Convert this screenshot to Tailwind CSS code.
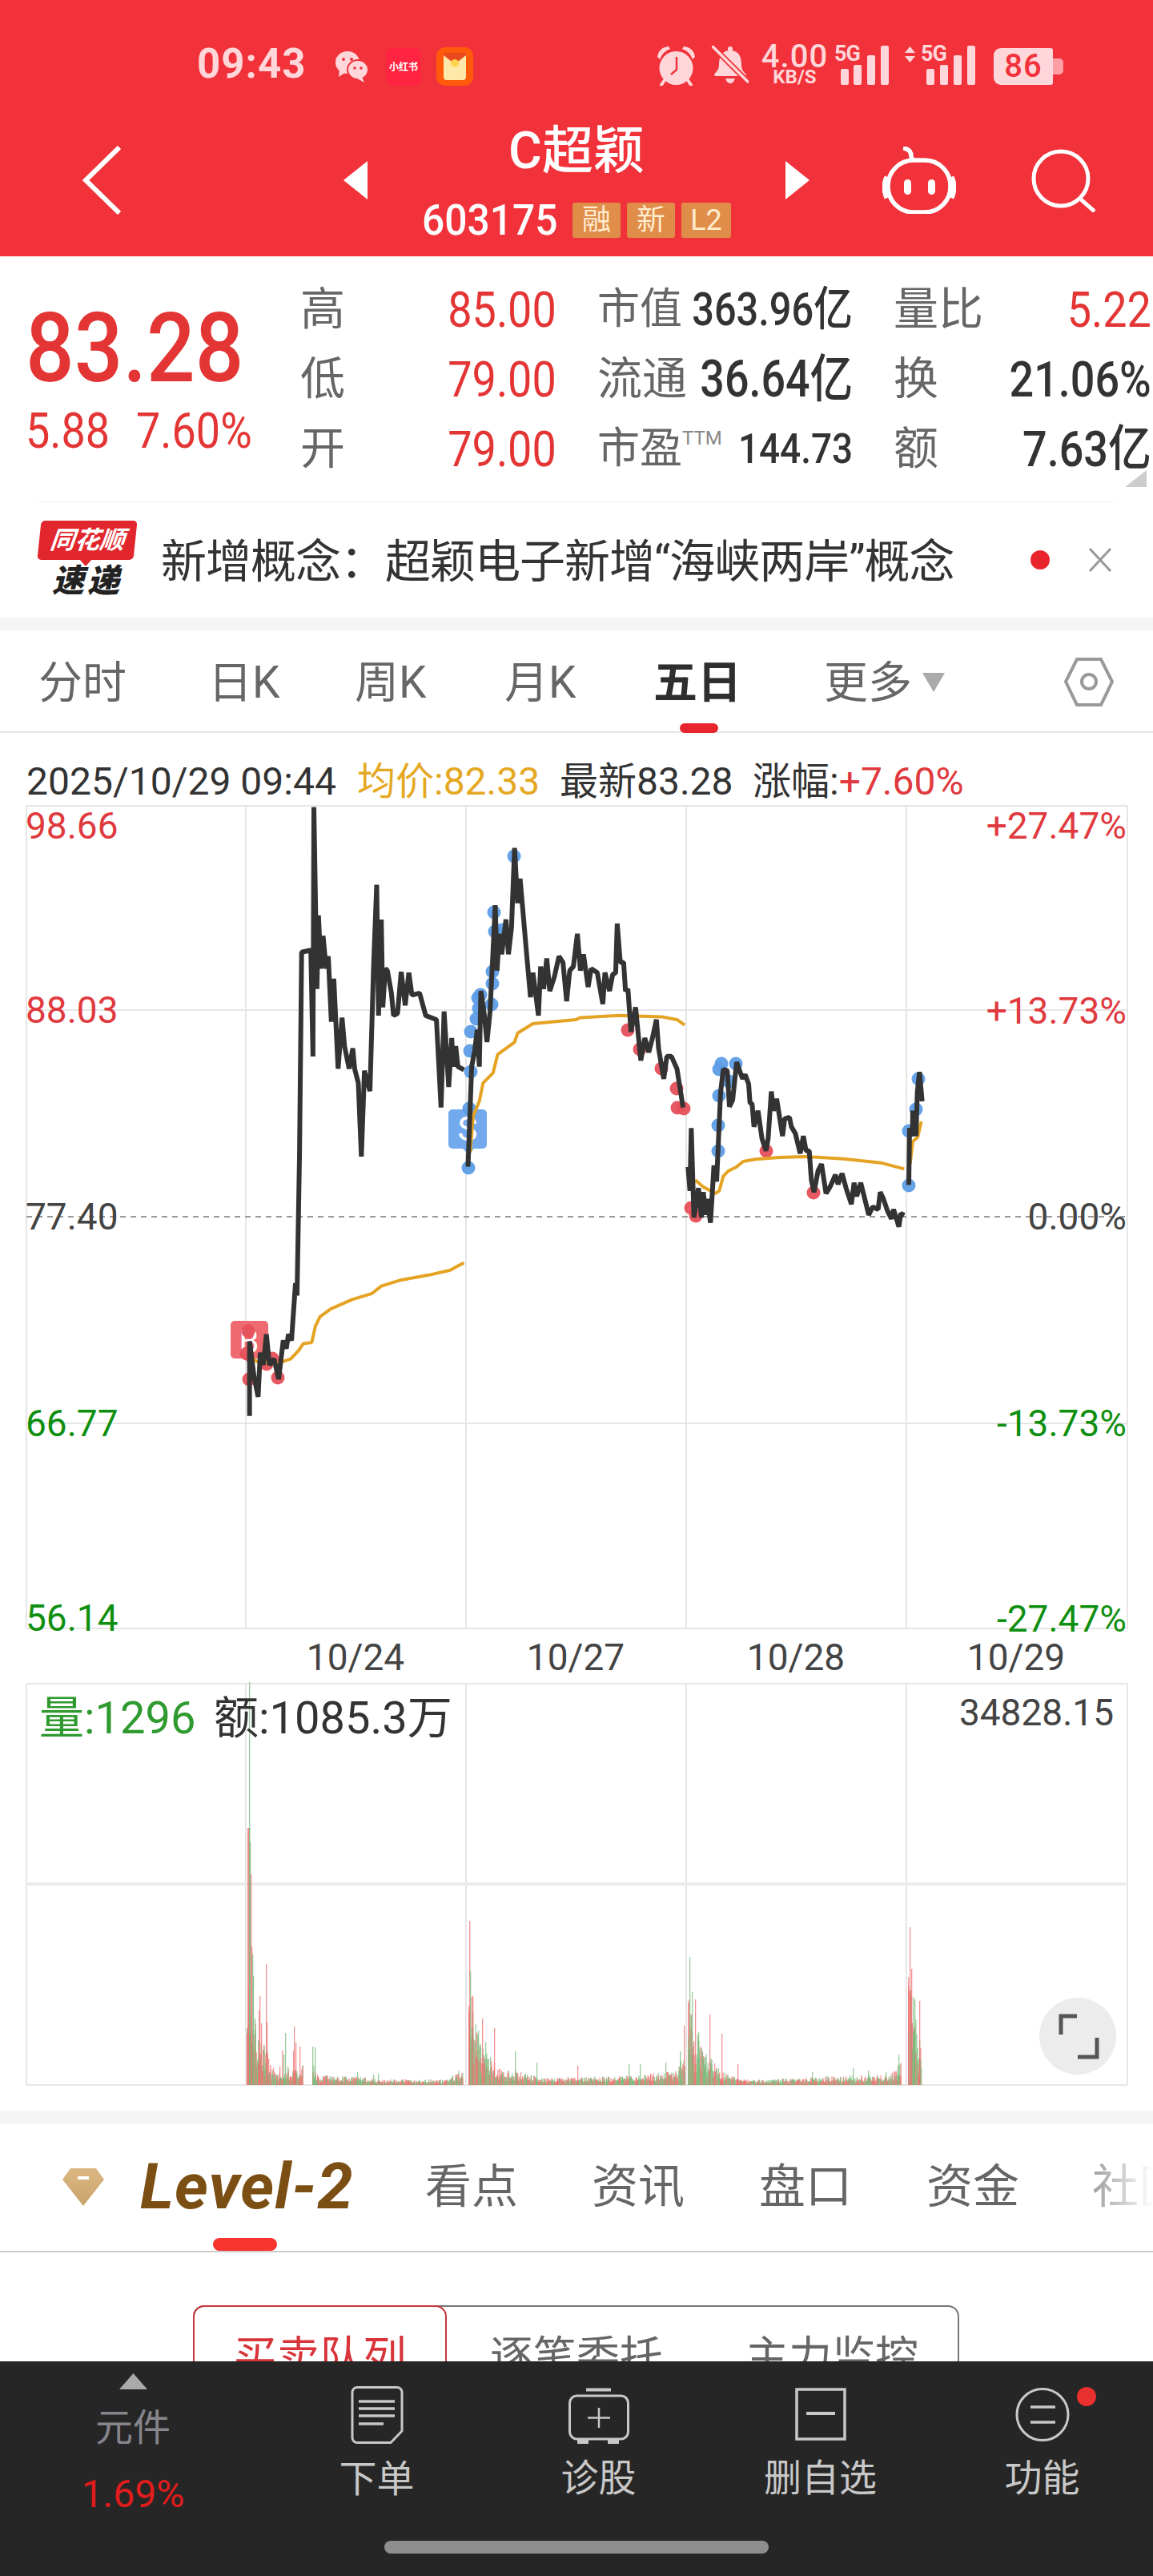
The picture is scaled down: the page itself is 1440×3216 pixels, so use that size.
<!DOCTYPE html>
<html lang="zh-CN">
<head>
<meta charset="UTF-8">
<meta name="viewport" content="width=device-width, initial-scale=1.0">
<script src="https://cdn.jsdelivr.net/npm/@tailwindcss/browser@4"></script>
<title>C超颖</title>
</head>
<body>
<div class="relative w-[1440px] h-[3216px] overflow-hidden bg-white flex flex-col font-[Roboto,'Noto_Sans_CJK_SC',sans-serif]">

  <!-- red header -->
  <header class="h-[320px] shrink-0 bg-[#f1323b] flex flex-col">
    <div class="h-[150px] pt-[57px] pl-[246px] flex items-start text-[#ffd6d9]">
      <span class="w-[172px] text-[51px] leading-[46px] font-bold tracking-[1px]">09:43</span>
      <svg class="w-[42px] h-[40px] mt-[6px] mr-[22px]" viewBox="0 0 42 40" fill="#ffd6d9"><ellipse cx="16" cy="15" rx="15" ry="14"/><path d="M6 24 L5 33 L14 27Z"/><ellipse cx="29" cy="24" rx="13" ry="12" stroke="#f1323b" stroke-width="2"/><path d="M34 33 L37 40 L28 35Z"/><circle cx="11" cy="11" r="2" fill="#f1323b"/><circle cx="21" cy="11" r="2" fill="#f1323b"/><circle cx="25" cy="22" r="1.8" fill="#f1323b"/><circle cx="33" cy="22" r="1.8" fill="#f1323b"/></svg>
      <div class="w-[44px] h-[47px] mt-[3px] mr-[19px] bg-[#ff2442] rounded-[8px] flex items-center justify-center text-white text-[12px] font-bold whitespace-nowrap">小红书</div>
      <svg class="w-[46px] h-[48px] mt-[2px]" viewBox="0 0 46 48"><rect width="46" height="48" rx="11" fill="#ff5a0a"/><rect x="9" y="7" width="28" height="34" rx="4" fill="#ffe9a8"/><path d="M9 10 L23 21 L37 10 V7 H9Z" fill="#e8491f"/><circle cx="23" cy="20" r="5" fill="#ffd34d"/></svg>
      <div class="flex-1"></div>
      <!-- alarm -->
      <svg class="w-[49px] h-[50px] mr-[20px]" viewBox="0 0 49 50" fill="#ffd6d9"><circle cx="24.5" cy="28" r="21"/><path d="M1 14 Q3 2 15 1 L17 4 Q8 7 4 17Z"/><path d="M48 14 Q46 2 34 1 L32 4 Q41 7 45 17Z"/><path d="M10 43 L6 49 M39 43 L43 49" stroke="#ffd6d9" stroke-width="4" stroke-linecap="round"/><path d="M25 14 V30 L18 36" stroke="#f1323b" stroke-width="2.5" fill="none"/></svg>
      <!-- muted bell -->
      <svg class="w-[46px] h-[47px] mr-[8px]" viewBox="0 0 46 47" fill="#ffd6d9"><circle cx="23" cy="4" r="3"/><path d="M23 6 C12 6 9 14 9 24 C9 30 5 33 3 36 L4 38 H42 L43 36 C40 33 37 30 37 24 C37 14 34 6 23 6Z"/><path d="M17 41 H29 Q27 47 23 47 Q19 47 17 41Z"/><path d="M1 1 L46 46" stroke="#f1323b" stroke-width="7"/><path d="M1 1 L45 45" stroke="#ffd6d9" stroke-width="3.5" stroke-linecap="round"/></svg>
      <div class="w-[99px] flex flex-col items-center font-medium">
        <span class="text-[40px] leading-[28px] tracking-[1px]">4.00</span>
        <span class="text-[24px] leading-[22px] font-bold">KB/S</span>
      </div>
      <div class="relative w-[68px] h-[50px]">
        <span class="absolute left-0 -top-[3px] text-[27px] leading-[27px] font-bold tracking-[-1px]">5G</span>
        <svg class="absolute left-[8px] top-0 w-[60px] h-[50px]" viewBox="0 0 60 50" fill="#ffd6d9"><rect x="0" y="29" width="10" height="20" rx="2"/><rect x="16" y="24" width="10" height="25" rx="2"/><rect x="33" y="12" width="10" height="37" rx="2"/><rect x="50" y="0" width="10" height="49" rx="2"/></svg>
      </div>
      <div class="relative w-[88px] h-[50px] ml-[20px]">
        <svg class="absolute left-0 top-[1px] w-[13px] h-[20px]" viewBox="0 0 13 20" fill="#ffd6d9"><path d="M6.5 0 L13 8 H0Z M6.5 20 L0 12 H13Z"/></svg>
        <span class="absolute left-[20px] -top-[3px] text-[27px] leading-[27px] font-bold tracking-[-1px]">5G</span>
        <svg class="absolute left-[27px] top-0 w-[61px] h-[50px]" viewBox="0 0 61 50" fill="#ffd6d9"><rect x="0" y="29" width="10" height="20" rx="2"/><rect x="17" y="24" width="10" height="25" rx="2"/><rect x="34" y="12" width="10" height="37" rx="2"/><rect x="51" y="0" width="10" height="49" rx="2"/></svg>
      </div>
      <div class="flex h-[46px] mt-[3px] ml-[23px] mr-[112px] items-center">
        <div class="w-[74px] h-[46px] bg-[#ffd6d9] rounded-l-[9px] rounded-r-[3px] flex items-center justify-center text-[#f1323b] text-[40px] font-medium tracking-[1px]">86</div>
        <div class="w-[13px] h-[20px] bg-[#ff9ea4] rounded-r-[5px]"></div>
      </div>
    </div>
    <div class="h-[150px] grid grid-cols-[429px_582px_1fr] items-center">
      <div class="pl-[103px]">
        <svg class="w-[48px] h-[86px]" viewBox="0 0 48 86" fill="none" stroke="#fff" stroke-width="6"><path d="M46 2 L4 43 L46 84"/></svg>
      </div>
      <div class="flex items-center justify-between">
        <svg class="w-[30px] h-[48px]" viewBox="0 0 30 48" fill="#fff"><path d="M30 0 V48 L0 24Z"/></svg>
        <div class="flex flex-col items-center text-white">
          <div class="text-[64px] leading-[72px] font-medium">C超颖</div>
          <div class="flex items-center mt-[28px] h-[44px]">
            <span class="text-[54px] leading-[44px] font-medium mr-[18px] w-[170px] scale-x-[.92] origin-left">603175</span>
            <span class="w-[60px] h-[44px] bg-[#e08d4a] text-[#ffeccf] text-[36px] rounded-[3px] flex items-center justify-center mr-[8px]">融</span>
            <span class="w-[60px] h-[44px] bg-[#e08d4a] text-[#ffeccf] text-[36px] rounded-[3px] flex items-center justify-center mr-[8px]">新</span>
            <span class="w-[62px] h-[44px] bg-[#e08d4a] text-[#ffeccf] text-[36px] rounded-[3px] flex items-center justify-center">L2</span>
          </div>
        </div>
        <svg class="w-[30px] h-[48px]" viewBox="0 0 30 48" fill="#fff"><path d="M0 0 V48 L30 24Z"/></svg>
      </div>
      <div class="flex items-center pl-[91px]">
        <svg class="w-[92px] h-[84px] mr-[94px]" viewBox="0 0 92 84" fill="none" stroke="#fff" stroke-width="5.5"><path d="M26 2 Q36 3 36 12 Q36 16 40 17"/><rect x="7" y="17" width="78" height="65" rx="32"/><path d="M6 38 Q0 50 6 64 M86 38 Q92 50 86 64" stroke-width="7"/><rect x="27" y="41" width="9" height="19" rx="4.5" fill="#fff" stroke="none"/><rect x="57" y="41" width="9" height="19" rx="4.5" fill="#fff" stroke="none"/></svg>
        <svg class="w-[80px] h-[80px]" viewBox="0 0 80 80" fill="none" stroke="#fff" stroke-width="5"><circle cx="37" cy="38" r="34"/><path d="M62 64 L79 79"/></svg>
      </div>
    </div>
  </header>

  <!-- quote block -->
  <section class="relative h-[307px] shrink-0">
    <div class="flex pt-[23px] h-[306px]">
      <div class="w-[375px] pl-[32px] shrink-0">
        <div class="text-[#e43535] text-[120px] leading-[118px] font-medium scale-x-[.89] origin-left mt-[33px]">83.28</div>
        <div class="flex text-[#e43535] text-[62px] leading-[70px] mt-[9px]">
          <span class="w-[138px] scale-x-[.87] origin-left">5.88</span>
          <span class="scale-x-[.87] origin-left whitespace-nowrap">7.60%</span>
        </div>
      </div>
      <div class="grid grid-cols-[320px_319px_322px] gap-x-[51px] auto-rows-[87px] text-[#666] text-[56px] leading-[87px] whitespace-nowrap">
        <div class="flex justify-between"><span>高</span><span class="text-[#e43535] text-[62px] scale-x-[.87] origin-right">85.00</span></div>
        <div class="flex justify-between"><span class="text-[53px]">市值</span><span class="-ml-[80px] text-[#333] text-[58px] font-medium scale-x-[.84] origin-right">363.96亿</span></div>
        <div class="flex justify-between"><span>量比</span><span class="text-[#e43535] text-[62px] scale-x-[.87] origin-right">5.22</span></div>

        <div class="flex justify-between"><span>低</span><span class="text-[#e43535] text-[62px] scale-x-[.87] origin-right">79.00</span></div>
        <div class="flex justify-between"><span class="text-[56px]">流通</span><span class="-ml-[80px] text-[#333] text-[64px] font-medium scale-x-[.84] origin-right">36.64亿</span></div>
        <div class="flex justify-between"><span>换</span><span class="text-[#333] text-[62px] font-medium scale-x-[.87] origin-right">21.06%</span></div>

        <div class="flex justify-between"><span>开</span><span class="text-[#e43535] text-[62px] scale-x-[.87] origin-right">79.00</span></div>
        <div class="flex justify-between"><span class="flex items-start text-[53px]">市盈<span class="text-[24px] leading-[24px] mt-[18px] text-[#888]">TTM</span></span><span class="text-[#333] text-[51px] font-medium scale-x-[.9] origin-right">144.73</span></div>
        <div class="flex justify-between"><span>额</span><span class="text-[#333] text-[62px] font-medium scale-x-[.87] origin-right">7.63亿</span></div>
      </div>
    </div>
    <svg class="absolute left-[1405px] top-[267px] w-[27px] h-[21px]" viewBox="0 0 27 21" fill="#ccc"><path d="M27 0 V21 H0Z"/></svg>
    <div class="mx-[48px] border-b border-[#eeeeee] w-[1343px]"></div>
  </section>

  <!-- news ticker -->
  <section class="h-[144px] shrink-0 flex items-center pl-[49px]">
    <div class="relative w-[120px] h-[98px] shrink-0 mr-[32px] italic">
      <div class="h-[49px] bg-[#e1262d] rounded-[5px] -skew-x-6 flex items-center justify-center text-white text-[31px] font-bold leading-none whitespace-nowrap">同花顺</div>
      <svg class="absolute left-[50px] top-[48px] w-[16px] h-[9px]" viewBox="0 0 16 9" fill="#e1262d"><path d="M0 0 H16 L8 9Z"/></svg>
      <div class="text-center text-[#222] text-[40px] font-black leading-[46px] mt-[4px] tracking-[4px]">速递</div>
    </div>
    <div class="w-[1086px] pt-[5px] text-[#333] text-[57px] leading-none whitespace-nowrap tracking-[-1px]">新增概念：超颖电子新增“海峡两岸”概念</div>
    <div class="w-[24px] h-[24px] rounded-full bg-[#e8242c] mr-[48px] shrink-0"></div>
    <svg class="w-[30px] h-[30px]" viewBox="0 0 30 30" fill="none" stroke="#999" stroke-width="3"><path d="M2 1 L28 29 M28 1 L2 29"/></svg>
  </section>
  <div class="h-[16px] shrink-0 bg-[#f5f5f5]"></div>

  <!-- period tabs -->
  <nav class="relative h-[128px] shrink-0 border-b-2 border-[#e6e6e6] pl-[48px] flex items-center text-[#666] text-[55px] leading-none pt-[4px]">
    <span class="w-[212px]">分时</span>
    <span class="w-[183px]">日K</span>
    <span class="w-[187px]">周K</span>
    <span class="w-[186px]">月K</span>
    <span class="w-[213px] text-[#2e2e2e] font-bold">五日</span>
    <span>更多</span>
    <svg class="w-[28px] h-[24px] ml-[13px]" viewBox="0 0 28 24" fill="#aaa"><path d="M0 0 H28 L14 24Z"/></svg>
    <svg class="absolute left-[1329px] top-[34px] w-[62px] h-[61px]" viewBox="0 0 62 61" fill="none" stroke="#999" stroke-width="4"><path d="M16 2 H46 L60 30 L46 59 H16 L2 30Z"/><circle cx="31" cy="30" r="9"/></svg>
    <div class="absolute left-[849px] -bottom-[2px] w-[48px] h-[12px] bg-[#e8242c] rounded-full"></div>
  </nav>

  <!-- crosshair info line -->
  <div class="h-[90px] shrink-0 pt-[32px] pl-[33px] flex items-center text-[48px] leading-none whitespace-nowrap text-[#333]">
    <span class="w-[413px]">2025/10/29 09:44</span>
    <span class="w-[253px] text-[#e5a823]">均价:82.33</span>
    <span class="w-[241px]">最新83.28</span>
    <span>涨幅:</span><span class="text-[#e03a3f]">+7.60%</span>
  </div>

  <!-- price chart, viewBox is in page coordinates -->
  <svg class="w-[1440px] h-[1095px] shrink-0" viewBox="0 1005 1440 1095" font-size="46">
    <g stroke="#e6e6e6" stroke-width="2" fill="none">
      <path d="M33 1006 H1408 M33 2033 H1408 M1408 1006 V2033 M307 1006 V2033 M582 1006 V2033 M857 1006 V2033 M1132 1006 V2033 M33 1006 V2033 M33 1261 H1408 M33 1777 H1408"/>
    </g>
    <path d="M33 1519 H1408" stroke="#999" stroke-width="2" stroke-dasharray="7 6"/>

    <path d="M293 1649 H330 a5 5 0 0 1 5 5 V1691 a5 5 0 0 1 -5 5 H319 L312 1704 L305 1696 H293 a5 5 0 0 1 -5 -5 V1654 a5 5 0 0 1 5 -5Z" fill="#ee6a70"/>
    <text x="311" y="1689" text-anchor="middle" fill="#fff" font-size="40">B</text>
    <path d="M565 1385 H603 a5 5 0 0 1 5 5 V1429 a5 5 0 0 1 -5 5 H592 L585 1441 L578 1434 H565 a5 5 0 0 1 -5 -5 V1390 a5 5 0 0 1 5 -5Z" fill="#73aaee"/>
    <text x="584" y="1424" text-anchor="middle" fill="#fff" font-size="42">S</text>

    <g fill="#e5505a" fill-opacity=".95">
      <circle cx="310" cy="1662" r="8.5"/><circle cx="308" cy="1690" r="8.5"/><circle cx="311" cy="1722" r="8.5"/><circle cx="333" cy="1703" r="8.5"/><circle cx="340" cy="1696" r="8.5"/><circle cx="347" cy="1720" r="8.5"/>
      <circle cx="784" cy="1286" r="8.5"/><circle cx="799" cy="1310" r="8.5"/><circle cx="826" cy="1334" r="8.5"/><circle cx="845" cy="1359" r="8.5"/><circle cx="846" cy="1383" r="8.5"/><circle cx="854" cy="1384" r="8.5"/>
      <circle cx="863" cy="1508" r="8.5"/><circle cx="869" cy="1518" r="8.5"/><circle cx="957" cy="1437" r="8.5"/><circle cx="1016" cy="1489" r="8.5"/>
    </g>
    <g fill="#5d9de6" fill-opacity=".95">
      <circle cx="585" cy="1458" r="8.5"/><circle cx="586" cy="1384" r="8.5"/><circle cx="588" cy="1338" r="8.5"/><circle cx="587" cy="1312" r="8.5"/><circle cx="588" cy="1288" r="8.5"/><circle cx="595" cy="1272" r="8.5"/><circle cx="598" cy="1259" r="8.5"/><circle cx="597" cy="1246" r="8.5"/><circle cx="600" cy="1242" r="8.5"/><circle cx="614" cy="1254" r="8.5"/><circle cx="615" cy="1228" r="8.5"/><circle cx="615" cy="1213" r="8.5"/><circle cx="618" cy="1163" r="8.5"/><circle cx="617" cy="1139" r="8.5"/><circle cx="627" cy="1161" r="8.5"/><circle cx="642" cy="1069" r="8.5"/>
      <circle cx="901" cy="1328" r="8.5"/><circle cx="898" cy="1335" r="8.5"/><circle cx="919" cy="1328" r="8.5"/><circle cx="898" cy="1368" r="8.5"/><circle cx="897" cy="1405" r="8.5"/><circle cx="897" cy="1437" r="8.5"/><circle cx="910" cy="1350" r="8.5"/>
      <circle cx="1135" cy="1480" r="8.5"/><circle cx="1135" cy="1412" r="8.5"/><circle cx="1144" cy="1385" r="8.5"/><circle cx="1147" cy="1347" r="8.5"/>
    </g>

    <!-- traced at two zoom levels, so each trace has its own transform -->
    <g transform="translate(260 1000) scale(.38265 .5102)" fill="none" stroke-linejoin="bevel">
      <polyline vector-effect="non-scaling-stroke" stroke="#e5a323" stroke-width="4" points="130,1355 160,1372 230,1375 270,1365 295,1345 310,1328 338,1325 350,1285 365,1262 400,1243 470,1220 535,1205 565,1187 630,1172 720,1160 790,1148 815,1138 835,1130"/>
      <polyline vector-effect="non-scaling-stroke" stroke="#e5a323" stroke-width="4" points="855,860 865,770 885,735 897,690 930,665 945,620 1000,590 1010,568 1060,545 1200,535 1215,530 1340,525 1480,528 1530,535 1555,548"/>
      <polyline vector-effect="non-scaling-stroke" stroke="#333" stroke-width="6" points="135,1505 135,1322 150,1410 163,1458 170,1350 180,1380 190,1305 200,1380 215,1365 230,1415 245,1320 255,1340 262,1305 272,1320 285,1180 290,1210 298,870 305,370 335,365 342,625 345,15 355,460 360,280 368,410 375,330 385,410 392,380 402,540 410,435 424,655 437,530 445,600 460,655 472,605 478,655 490,690 500,870 510,660 528,710 540,400 550,205 556,525 565,290 570,505 578,410 585,415 598,470 605,525 618,520 630,418 643,500 655,420 665,475 690,470 710,525 745,535 760,750 770,515 785,700 795,580 800,650 808,600 815,650 835,658"/>
      <polyline vector-effect="non-scaling-stroke" stroke="#333" stroke-width="6" points="848,895 860,650 870,610 878,560 885,650 890,465 900,515 910,590 920,515 937,255 943,415 950,325 958,375 972,290 980,375 990,310 1000,115 1010,250 1018,190 1025,250 1040,380 1052,480 1060,420 1078,525 1085,405 1095,460 1105,385 1115,465 1130,430 1145,380 1158,395 1170,490 1180,415 1192,405 1205,325 1215,415 1225,375 1240,455 1250,410 1270,420 1288,497 1295,420 1310,465 1320,425 1330,420 1335,300 1345,395 1356,395 1362,465 1370,460 1380,565 1395,505 1412,635 1425,580 1438,615 1450,580 1463,535 1470,605 1487,680 1497,625 1512,625 1530,655 1550,750"/>
    </g>
    <g transform="translate(840 1240) scale(.33333)" fill="none" stroke-linejoin="bevel">
      <polyline vector-effect="non-scaling-stroke" stroke="#e5a323" stroke-width="4" points="85,700 115,725 160,750 175,740 190,685 210,665 240,650 265,630 310,622 400,615 500,612 640,620 780,635 868,658"/>
      <polyline vector-effect="non-scaling-stroke" stroke="#e5a323" stroke-width="4" points="890,640 900,555 918,540 932,480"/>
      <polyline vector-effect="non-scaling-stroke" stroke="#333" stroke-width="6" points="58,650 65,740 70,505 80,840 97,730 108,840 115,745 125,830 130,770 142,860 155,645 165,705 180,370 190,285 205,290 213,425 225,400 240,258 262,320 272,305 285,340 290,410 298,415 305,500 320,440 335,545 350,590 358,545 370,368 378,440 390,395 412,535 420,470 438,465 445,500 460,525 478,600 490,535 500,590 512,590 520,700 530,745 545,665 558,640 575,750 590,725 610,680 620,715 635,675 650,730 670,790 680,710 690,760 705,710 725,790 735,830 750,800 770,810 778,745 790,770 805,815 820,845 828,810 848,875 855,825 868,832"/>
      <polyline vector-effect="non-scaling-stroke" stroke="#333" stroke-width="6" points="885,718 888,505 898,535 900,440 912,535 917,370 925,295 935,405"/>
    </g>

    <g dominant-baseline="central">
      <text x="32" y="1031" fill="#e03a3f">98.66</text>
      <text x="32" y="1261" fill="#e03a3f">88.03</text>
      <text x="32" y="1519" fill="#444">77.40</text>
      <text x="32" y="1777" fill="#0f8f0f">66.77</text>
      <text x="32" y="2020" fill="#0f8f0f">56.14</text>
      <text x="1407" y="1031" fill="#e03a3f" text-anchor="end">+27.47%</text>
      <text x="1407" y="1262" fill="#e03a3f" text-anchor="end">+13.73%</text>
      <text x="1407" y="1519" fill="#444" text-anchor="end">0.00%</text>
      <text x="1407" y="1777" fill="#0f8f0f" text-anchor="end">-13.73%</text>
      <text x="1407" y="2021" fill="#0f8f0f" text-anchor="end">-27.47%</text>
      <text x="444" y="2069" fill="#444" text-anchor="middle">10/24</text>
      <text x="719" y="2069" fill="#444" text-anchor="middle">10/27</text>
      <text x="994" y="2069" fill="#444" text-anchor="middle">10/28</text>
      <text x="1269" y="2069" fill="#444" text-anchor="middle">10/29</text>
    </g>
  </svg>

  <!-- volume chart -->
  <svg class="w-[1440px] h-[535px] shrink-0" viewBox="0 2100 1440 535">
    <path d="M33 2102 H1408 M33 2603 H1408 M33 2102 V2603 M1408 2102 V2603 M582 2102 V2603 M857 2102 V2603 M1132 2102 V2603 M307 2102 V2603" stroke="#e6e6e6" stroke-width="2" fill="none"/>
    <path d="M33 2352 H1408" stroke="#ececec" stroke-width="4"/>
    <g id="vol"></g>
    <g dominant-baseline="central" font-size="56">
      <text x="49" y="2145" fill="#2f9a2f">量:1296</text>
      <text x="267" y="2145" fill="#333">额:1085.3万</text>
      <text x="1391" y="2138" fill="#444" font-size="46" text-anchor="end">34828.15</text>
    </g>
    <circle cx="1346" cy="2542" r="48" fill="#ececec"/>
    <path d="M1345 2517 H1325 V2540 M1346 2568 H1370 V2544" fill="none" stroke="#555" stroke-width="5"/>
  </svg>

  <div class="h-[17px] shrink-0 bg-[#f5f5f5]"></div>

  <!-- level-2 tabs -->
  <nav class="relative h-[160px] shrink-0 border-b-2 border-[#cccccc] flex items-center pl-[78px] pb-[2px] text-[#666] text-[58px] leading-none whitespace-nowrap overflow-hidden">
    <svg class="w-[52px] h-[47px] mr-[45px] shrink-0" viewBox="0 0 52 47"><defs><linearGradient id="gem" x1="0" y1="0" x2="0" y2="1"><stop offset="0" stop-color="#dbb783"/><stop offset="1" stop-color="#c9a36c"/></linearGradient></defs><path d="M10 0 H42 L52 14 L26 47 L0 14Z" fill="url(#gem)"/><rect x="19" y="10" width="14" height="4" fill="#fff"/></svg>
    <span class="w-[356px] shrink-0 text-[#7b4f14] text-[80px] font-bold italic tracking-[1px]">Level-2</span>
    <span class="w-[208px] shrink-0">看点</span>
    <span class="w-[209px] shrink-0">资讯</span>
    <span class="w-[209px] shrink-0">盘口</span>
    <span class="w-[207px] shrink-0">资金</span>
    <span class="shrink-0">社区</span>
    <div class="absolute right-0 top-0 bottom-0 w-[84px] bg-linear-to-r from-white/30 to-white"></div>
    <div class="absolute left-[266px] bottom-0 w-[80px] h-[16px] bg-[#f8342f] rounded-full"></div>
  </nav>

  <!-- segmented control, cut off by the bottom bar -->
  <div class="ml-[241px] mt-[66px] w-[957px] h-[132px] shrink-0 flex border-2 border-[#777] rounded-t-[14px] text-[54px] leading-none text-[#666]">
    <div class="w-[317px] -ml-[2px] -mt-[2px] h-[132px] border-2 border-[#c8383d] rounded-t-[14px] flex items-center justify-center text-[#d8343a]">买卖队列</div>
    <div class="w-[324px] flex items-center justify-center">逐笔委托</div>
    <div class="flex-1 flex items-center justify-center">主力监控</div>
  </div>

  <!-- bottom bar -->
  <footer class="absolute left-0 bottom-0 w-[1440px] h-[268px] bg-[#262626] grid grid-cols-[332px_277px_277px_277px_277px] text-[#c8c8c8] text-[47px] leading-[54px]">
    <div class="flex flex-col items-center pt-[15px]">
      <svg class="w-[35px] h-[20px]" viewBox="0 0 35 20" fill="#aaa"><path d="M17.5 0 L35 20 H0Z"/></svg>
      <span class="text-[#85858b] mt-[21px]">元件</span>
      <span class="text-[#e01c1c] text-[48px] mt-[29px]">1.69%</span>
    </div>
    <div class="flex flex-col items-center pt-[31px]">
      <svg class="w-[66px] h-[72px]" viewBox="0 0 66 72" fill="none" stroke="#c8c8c8" stroke-width="3"><path d="M8 1.5 H58 a6 6 0 0 1 6 6 V56 L50 70.5 H8 a6 6 0 0 1 -6 -6 V7.5 a6 6 0 0 1 6 -6Z"/><path d="M10 19 H55 M10 28 H55 M10 37 H55 M10 47 H41" stroke-width="3.5"/></svg>
      <span class="mt-[17px]">下单</span>
    </div>
    <div class="flex flex-col items-center pt-[33px]">
      <svg class="w-[76px] h-[70px]" viewBox="0 0 76 70" fill="none" stroke="#c8c8c8" stroke-width="3"><path d="M22 2.5 H53" stroke-width="4"/><rect x="1.5" y="10" width="73" height="54" rx="9"/><path d="M11 67 H25 M49 67 H63" stroke-width="6"/><path d="M38 25 V50 M24 37.5 H52" stroke-width="2.5"/></svg>
      <span class="mt-[16px]">诊股</span>
    </div>
    <div class="flex flex-col items-center pt-[33px]">
      <svg class="w-[64px] h-[66px]" viewBox="0 0 64 66" fill="none" stroke="#c8c8c8" stroke-width="3.5"><rect x="2" y="2" width="60" height="62"/><path d="M14 32 H50" stroke-width="4"/></svg>
      <span class="mt-[20px]">删自选</span>
    </div>
    <div class="relative flex flex-col items-center pt-[32px]">
      <svg class="w-[68px] h-[69px]" viewBox="0 0 68 69" fill="none" stroke="#c8c8c8" stroke-width="3"><circle cx="34" cy="34.5" r="32"/><path d="M19 25 H50 M19 44 H50" stroke-width="3.5"/></svg>
      <span class="mt-[18px]">功能</span>
      <div class="absolute left-[182px] top-[32px] w-[24px] h-[24px] rounded-full bg-[#e8302f]"></div>
    </div>
    <div class="absolute left-[480px] bottom-[28px] w-[480px] h-[16px] rounded-full bg-[#8e8e8e]"></div>
  </footer>
</div>

<script>
// volume bars: envelope per session (x, top y) plus the hand-read spikes
const envelope = [
  [[308,2400],[316,2500],[322,2530],[330,2555],[345,2585],[378,2578]],
  [[390,2570],[396,2590],[440,2592],[480,2596],[560,2596],[570,2585],[578,2580]],
  [[585,2440],[590,2510],[600,2550],[620,2578],[640,2585],[680,2594],[760,2592],[800,2590],[845,2585],[855,2560]],
  [[859,2480],[866,2520],[880,2560],[900,2585],[925,2596],[1000,2594],[1060,2590],[1110,2590],[1125,2570]],
  [[1134,2460],[1142,2490],[1150,2560]]
];
const spikes = [
  [311,2100,'g'],[309,2282,'r'],[310,2282,'r'],[311,2282,'g'],[312,2300,'g'],[313,2340,'r'],[314,2430,'r'],[315,2440,'g'],[316,2467,'g'],[318,2520,'g'],[323,2510,'r'],[324,2492,'r'],[326,2526,'r'],[329,2560,'g'],[332,2452,'r'],[333,2525,'r'],[335,2570,'r'],[349,2580,'r'],[352,2560,'r'],[354,2565,'g'],[356,2538,'g'],[359,2580,'g'],[366,2560,'r'],[367,2530,'r'],[369,2550,'r'],[374,2555,'r'],[390,2555,'g'],[393,2556,'g'],[446,2587,'g'],[466,2590,'g'],[472,2589,'g'],
  [586,2398,'r'],[587,2461,'g'],[590,2492,'r'],[597,2535,'g'],[602,2520,'r'],[606,2550,'g'],[617,2532,'r'],[643,2561,'g'],[670,2575,'g'],[721,2579,'r'],[785,2577,'g'],[799,2577,'g'],[831,2575,'g'],[849,2561,'g'],[854,2529,'r'],
  [861,2443,'g'],[864,2487,'g'],[868,2496,'r'],[872,2537,'g'],[886,2515,'r'],[901,2539,'r'],[921,2577,'r'],[1014,2587,'g'],[1065,2582,'g'],[1084,2585,'g'],[1106,2587,'g'],[1122,2565,'g'],
  [1136,2406,'r'],[1138,2458,'r'],[1141,2537,'g'],[1148,2498,'r'],[1150,2582,'g']
];
const vol = document.getElementById('vol');
const addBar = (x, top, kind) => {
  const rect = document.createElementNS('http://www.w3.org/2000/svg', 'rect');
  rect.setAttribute('x', x);
  rect.setAttribute('y', top);
  rect.setAttribute('width', 1.3);
  rect.setAttribute('height', 2603 - top);
  rect.setAttribute('fill', kind === 'r' ? '#ee6f6f' : '#78b978');
  rect.setAttribute('fill-opacity', .75);
  vol.appendChild(rect);
};
let seed = 17;
const rnd = () => (seed = (seed * 16807) % 2147483647) / 2147483647;
envelope.forEach((env) => {
  for (let i = 0; i < env.length - 1; i++) {
    const [x0, y0] = env[i], [x1, y1] = env[i + 1];
    for (let x = x0; x < x1; x += 1.2) {
      const top = y0 + (y1 - y0) * (x - x0) / (x1 - x0);
      const h = (2603 - top) * (.35 + .65 * rnd());
      addBar(x, 2603 - h, rnd() > .5 ? 'r' : 'g');
      addBar(x, 2603 - h * (.4 + .6 * rnd()), rnd() > .5 ? 'r' : 'g');
    }
  }
});
spikes.forEach(([x, top, kind]) => addBar(x, top, kind));
</script>
</body>
</html>
